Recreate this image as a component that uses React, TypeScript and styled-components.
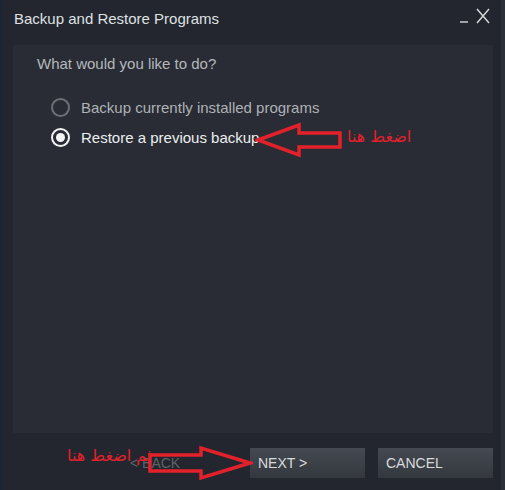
import React from 'react'
import styled, { createGlobalStyle } from 'styled-components'

const GlobalStyle = createGlobalStyle`
  html, body {
    margin: 0;
    padding: 0;
    background: #23262e;
  }
`

interface IOption {
  label: string
  checked: boolean
}

const options: IOption[] = [
  { label: 'Backup currently installed programs', checked: false },
  { label: 'Restore a previous backup', checked: true },
]

const App: React.FC = (): JSX.Element => {
  return (
    <Window>
      <GlobalStyle />

      <TitleBar>
        <Title>Backup and Restore Programs</Title>

        <Controls>
          <svg width="12" height="16" viewBox="0 0 12 16">
            <line x1="2" y1="14" x2="10" y2="14" stroke="#c9cbce" strokeWidth="1.5" />
          </svg>
          <svg width="16" height="16" viewBox="0 0 16 16">
            <path d="M2 1 L14 15 M14 1 L2 15" stroke="#d4d6d8" strokeWidth="1.5" />
          </svg>
        </Controls>
      </TitleBar>

      <Panel>
        <Question>What would you like to do?</Question>

        <Options>
          {options.map((option) => (
            <Option key={option.label}>
              <Radio $checked={option.checked} />
              <OptionLabel $checked={option.checked}>{option.label}</OptionLabel>
            </Option>
          ))}
        </Options>
      </Panel>

      <Footer>
        <Button disabled>&lt; BACK</Button>
        <Button>NEXT &gt;</Button>
        <Button>CANCEL</Button>
      </Footer>

      <ArrowLeft width="90" height="36" viewBox="0 0 90 36">
        <path
          d="M3 18 L44 3 L44 11 L85 11 L85 25 L44 25 L44 33 Z"
          fill="none"
          stroke="#e3212b"
          strokeWidth="3.5"
          strokeLinejoin="miter"
        />
      </ArrowLeft>
      <Note $left={344} $top={127}>اضغط هنا</Note>

      <ArrowRight width="106" height="36" viewBox="0 0 106 36">
        <path
          d="M3 10 L54 10 L54 3 L103 18 L54 33 L54 26 L3 26 Z"
          fill="none"
          stroke="#e3212b"
          strokeWidth="3.5"
          strokeLinejoin="miter"
        />
      </ArrowRight>
      <Note $left={64} $top={446}>ثم اضغط هنا</Note>
    </Window>
  )
}

export default App

const Window = styled.div`
  position: relative;
  display: flex;
  flex-direction: column;
  width: 505px;
  height: 490px;
  box-sizing: border-box;
  background: #23262e;
  border-left: 3px solid #1c2632;
  border-right: 4px solid #2c3039;
  font-family: 'Liberation Sans', Arial, sans-serif;
  overflow: hidden;
`

const TitleBar = styled.div`
  display: flex;
  align-items: flex-start;
  justify-content: space-between;
  height: 45px;
  padding: 10px 10px 0 11px;
  box-sizing: border-box;
`

const Title = styled.div`
  font-size: 15px;
  line-height: 17px;
  color: #dfe1e3;
`

const Controls = styled.div`
  display: flex;
  align-items: flex-start;
  gap: 5px;
  margin-top: -2px;
`

const Panel = styled.div`
  flex: 1;
  margin: 0 8px 0 10px;
  padding: 10px 24px;
  background: #292c34;
`

const Question = styled.div`
  font-size: 15px;
  line-height: 17px;
  color: #b4b8bc;
`

const Options = styled.div`
  display: flex;
  flex-direction: column;
  margin-top: 20px;
  margin-left: 14px;
`

const Option = styled.div`
  display: flex;
  align-items: center;
  gap: 11px;
  height: 30px;
`

const Radio = styled.div<{ $checked: boolean }>`
  position: relative;
  width: 19px;
  height: 19px;
  box-sizing: border-box;
  border-radius: 50%;
  border: 2px solid ${({ $checked }) => ($checked ? '#f2f3f4' : '#6c7076')};

  &::after {
    content: '';
    display: ${({ $checked }) => ($checked ? 'block' : 'none')};
    position: absolute;
    top: 3px;
    left: 3px;
    width: 9px;
    height: 9px;
    border-radius: 50%;
    background: #f4f5f6;
  }
`

const OptionLabel = styled.div<{ $checked: boolean }>`
  font-size: 15px;
  line-height: 17px;
  color: ${({ $checked }) => ($checked ? '#eceef0' : '#aeb2b6')};
`

const Footer = styled.div`
  display: flex;
  justify-content: flex-end;
  gap: 13px;
  height: 57px;
  padding: 15px 8px 0 0;
  box-sizing: border-box;
`

const Button = styled.button`
  width: 115px;
  height: 30px;
  padding: 0 8px;
  border: none;
  text-align: left;
  font-family: 'Liberation Sans', Arial, sans-serif;
  font-size: 14px;
  color: #d9dbdd;
  background: linear-gradient(#454a52, #33373e);

  &:disabled {
    background: transparent;
    color: #5e636a;
  }
`

const ArrowLeft = styled.svg`
  position: absolute;
  left: 252px;
  top: 122px;
`

const ArrowRight = styled.svg`
  position: absolute;
  left: 144px;
  top: 445px;
`

const Note = styled.div<{ $left: number; $top: number }>`
  position: absolute;
  left: ${({ $left }) => $left}px;
  top: ${({ $top }) => $top}px;
  font-family: 'DejaVu Sans', 'Noto Sans', sans-serif;
  font-size: 16px;
  line-height: 20px;
  color: #e3212b;
  direction: rtl;
  white-space: nowrap;
`
